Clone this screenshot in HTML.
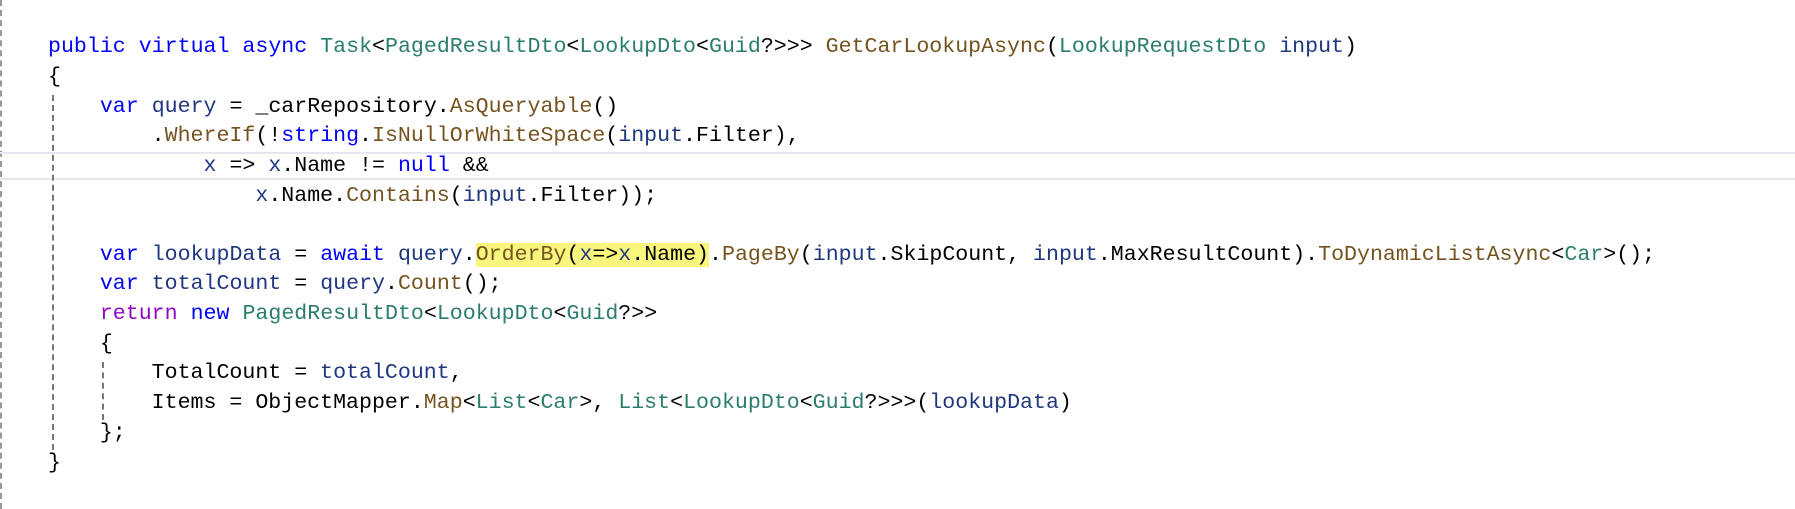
<!DOCTYPE html>
<html><head><meta charset="utf-8"><style>
html,body{margin:0;padding:0;background:#fff;width:1795px;height:509px;overflow:hidden;position:relative}
.l{position:absolute;left:48px;white-space:pre;font-family:"Liberation Mono",monospace;font-size:21.6px;line-height:30px;height:30px;color:#000}
.k{color:#0000ff}.t{color:#2b7d6e}.m{color:#74531f}.v{color:#1f377f}.r{color:#8f08c4}
.hl{background:#f9f67e}
.g{position:absolute;width:0;border-left:2px dashed #777}
.band{position:absolute;left:0;width:1795px;height:2px;background:#e6e6ee}
</style></head><body>
<div class="g" style="left:0;top:0;height:509px;border-left-color:#999"></div>
<div class="band" style="top:152px"></div>
<div class="band" style="top:178px"></div>
<div class="g" style="left:52px;top:95px;height:355px"></div>
<div class="g" style="left:102px;top:362px;height:58px"></div>
<div class="l" style="top:32px"><span class="k">public</span> <span class="k">virtual</span> <span class="k">async</span> <span class="t">Task</span>&lt;<span class="t">PagedResultDto</span>&lt;<span class="t">LookupDto</span>&lt;<span class="t">Guid</span>?&gt;&gt;&gt; <span class="m">GetCarLookupAsync</span>(<span class="t">LookupRequestDto</span> <span class="v">input</span>)</div>
<div class="l" style="top:62px">{</div>
<div class="l" style="top:92px">    <span class="k">var</span> <span class="v">query</span> = _carRepository.<span class="m">AsQueryable</span>()</div>
<div class="l" style="top:121px">        .<span class="m">WhereIf</span>(!<span class="k">string</span>.<span class="m">IsNullOrWhiteSpace</span>(<span class="v">input</span>.Filter),</div>
<div class="l" style="top:151px">            <span class="v">x</span> =&gt; <span class="v">x</span>.Name != <span class="k">null</span> &amp;&amp;</div>
<div class="l" style="top:181px">                <span class="v">x</span>.Name.<span class="m">Contains</span>(<span class="v">input</span>.Filter));</div>
<div class="l" style="top:240px">    <span class="k">var</span> <span class="v">lookupData</span> = <span class="k">await</span> <span class="v">query</span>.<span class="hl"><span class="m">OrderBy</span>(<span class="v">x</span>=&gt;<span class="v">x</span>.Name)</span>.<span class="m">PageBy</span>(<span class="v">input</span>.SkipCount, <span class="v">input</span>.MaxResultCount).<span class="m">ToDynamicListAsync</span>&lt;<span class="t">Car</span>&gt;();</div>
<div class="l" style="top:269px">    <span class="k">var</span> <span class="v">totalCount</span> = <span class="v">query</span>.<span class="m">Count</span>();</div>
<div class="l" style="top:299px">    <span class="r">return</span> <span class="k">new</span> <span class="t">PagedResultDto</span>&lt;<span class="t">LookupDto</span>&lt;<span class="t">Guid</span>?&gt;&gt;</div>
<div class="l" style="top:329px">    {</div>
<div class="l" style="top:358px">        TotalCount = <span class="v">totalCount</span>,</div>
<div class="l" style="top:388px">        Items = ObjectMapper.<span class="m">Map</span>&lt;<span class="t">List</span>&lt;<span class="t">Car</span>&gt;, <span class="t">List</span>&lt;<span class="t">LookupDto</span>&lt;<span class="t">Guid</span>?&gt;&gt;&gt;(<span class="v">lookupData</span>)</div>
<div class="l" style="top:418px">    };</div>
<div class="l" style="top:448px">}</div>
</body></html>
